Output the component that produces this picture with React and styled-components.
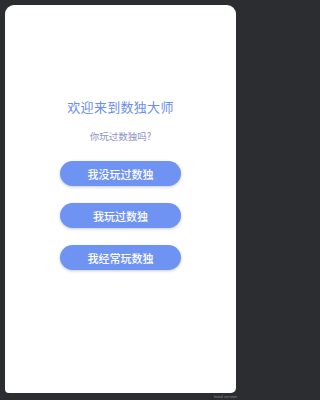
import React from 'react';
import styled, { createGlobalStyle } from 'styled-components';

const Global = createGlobalStyle`
  html, body {
    margin: 0;
    padding: 0;
    background: #2b2d31;
    font-family: "Noto Sans CJK SC", "Noto Sans", sans-serif;
  }
`;

const Screen = styled.div`
  position: relative;
  width: 240px;
  height: 400px;
  box-sizing: border-box;
  padding: 5px 4px 7px 5px;
  display: flex;
`;

const Card = styled.div`
  flex: 1;
  background: #ffffff;
  border-radius: 9px 9px 5px 4px;
  display: flex;
  flex-direction: column;
  align-items: center;
  padding-top: 89px;
`;

const Title = styled.h1`
  margin: 0;
  font-size: 13px;
  font-weight: 400;
  line-height: 26px;
  color: #6a8ef0;
  letter-spacing: 0.3px;
`;

const Question = styled.p`
  margin: 9px 0 18px;
  font-size: 9.5px;
  line-height: 14px;
  color: #9090c4;
`;

const Choices = styled.div`
  display: flex;
  flex-direction: column;
  gap: 17px;
`;

const Choice = styled.button`
  width: 121px;
  height: 25px;
  border: none;
  border-radius: 13px;
  background: #6e93f3;
  color: #ffffff;
  font-family: inherit;
  font-size: 11px;
  font-weight: 500;
  box-shadow: 0 1px 3px rgba(60, 80, 140, 0.3);
  cursor: pointer;
`;

const Version = styled.span`
  position: absolute;
  right: 3px;
  bottom: 1px;
  font-family: "Liberation Sans", sans-serif;
  font-size: 4px;
  color: #8a8c90;
`;

const options = ['我没玩过数独', '我玩过数独', '我经常玩数独'];

export default function App() {
  return (
    <>
      <Global />
      <Screen>
        <Card>
          <Title>欢迎来到数独大师</Title>
          <Question>你玩过数独吗?</Question>
          <Choices>
            {options.map(text => (
              <Choice key={text}>{text}</Choice>
            ))}
          </Choices>
        </Card>
        <Version>Initial version</Version>
      </Screen>
    </>
  );
}
